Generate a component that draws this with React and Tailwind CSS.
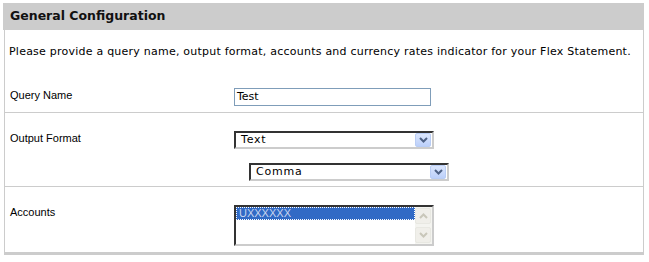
import React from "react";

function Chevron() {
  return (
    <svg width="9" height="6" viewBox="0 0 9 6" className="block">
      <path d="M1 1 L4.5 4.5 L8 1" stroke="#4d6185" strokeWidth="2" fill="none" />
    </svg>
  );
}

function SelectBox({ value }) {
  return (
    <div className="flex h-[18px] w-[200px] border-t-2 border-l-2 border-t-[#333] border-l-[#333] border-b-2 border-r-2 border-b-[#ccc] border-r-[#ccc] bg-white">
      <div className="flex-1 pl-[5px] text-[11px] leading-[14px] tracking-[0.8px] text-black" style={{ fontFamily: '"DejaVu Sans", Verdana, sans-serif' }}>
        {value}
      </div>
      <div className="mr-[1px] flex h-[14px] w-[16px] items-center justify-center rounded-[2px] border border-[#b9cdf5] bg-gradient-to-b from-[#dbe6fd] to-[#bcd0fa]">
        <Chevron />
      </div>
    </div>
  );
}

export default function App() {
  const labelFont = { fontFamily: '"Liberation Sans", Arial, sans-serif' };
  const vFont = { fontFamily: '"DejaVu Sans", Verdana, sans-serif' };
  return (
    <div className="h-[262px] w-[649px] bg-white pt-[3px] pl-[4px] pr-[5px]">
      <div className="ml-[-1px] flex h-[27px] items-center bg-[#cccccc] pl-[7px]">
        <span className="text-[12.5px] font-bold text-[#111]" style={vFont}>General Configuration</span>
      </div>
      <div className="border-l border-r border-b-[3px] border-[#cccccc]">
        <div className="pl-[4px] pt-[15px] text-[11px] leading-[13px] tracking-[0.23px] text-black" style={vFont}>
          Please provide a query name, output format, accounts and currency rates indicator for your Flex Statement.
        </div>
        <div className="grid grid-cols-[229px_1fr] border-b border-[#cccccc] pt-[30px] pb-[6px]">
          <div className="pl-[5px] pt-[1px] text-[11px] leading-[13px] text-black" style={labelFont}>Query Name</div>
          <div className="flex h-[18px] w-[197px] items-center border border-[#7f9db9] bg-white pl-[2px] text-[11px] text-black" style={vFont}>
            Test
          </div>
        </div>
        <div className="grid grid-cols-[229px_1fr] border-b border-[#cccccc] pt-[18px] pb-[5px]">
          <div className="pl-[5px] pt-[1px] text-[11px] leading-[13px] text-black" style={labelFont}>Output Format</div>
          <div className="flex flex-col gap-[14px]">
            <SelectBox value="Text" />
            <div className="pl-[15px]">
              <SelectBox value="Comma" />
            </div>
          </div>
        </div>
        <div className="grid grid-cols-[229px_1fr] pt-[18px] pb-[6px]">
          <div className="pl-[5px] pt-[1px] text-[11px] leading-[13px] text-black" style={labelFont}>Accounts</div>
          <div className="flex h-[41px] w-[200px] border-t-2 border-l-2 border-t-[#333] border-l-[#333] border-b-2 border-r-2 border-b-[#ccc] border-r-[#ccc] bg-white">
            <div className="flex-1">
              <div className="h-[13px] border border-dotted border-white bg-[#316ac5] pl-[2px] text-[11px] leading-[11px] text-[#c8d4ee]" style={labelFont}>
                UXXXXXX
              </div>
            </div>
            <div className="flex w-[17px] flex-col justify-between bg-[#f4f4f0] py-[1px]">
              <div className="flex h-[16px] w-[16px] items-center justify-center rounded-[2px] border border-[#e8e8e2] bg-[#f0efea]">
                <svg width="9" height="6" viewBox="0 0 9 6"><path d="M1 5 L4.5 1.5 L8 5" stroke="#c9c7ba" strokeWidth="2" fill="none" /></svg>
              </div>
              <div className="flex h-[16px] w-[16px] items-center justify-center rounded-[2px] border border-[#e8e8e2] bg-[#f0efea]">
                <svg width="9" height="6" viewBox="0 0 9 6"><path d="M1 1 L4.5 4.5 L8 1" stroke="#c9c7ba" strokeWidth="2" fill="none" /></svg>
              </div>
            </div>
          </div>
        </div>
      </div>
    </div>
  );
}
